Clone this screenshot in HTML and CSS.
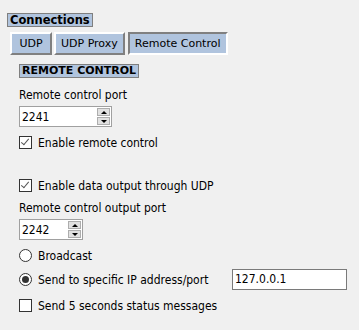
FILE: index.html
```html
<!DOCTYPE html>
<html lang="en">

<head>
  <meta charset="UTF-8" />
  <title>Connections</title>
  <link rel="stylesheet" href="styles.css">
</head>

<body>
  <div class="wrap">
    <div class="title">Connections</div>
    <div class="tabs">
      <button class="tab udp">UDP</button>
      <button class="tab">UDP Proxy</button>
      <button class="tab active">Remote Control</button>
    </div>
    <div class="panel">
      <div class="section">REMOTE CONTROL</div>

      <div class="label first">Remote control port</div>
      <div class="spin wide">
        <span class="value">2241</span>
        <span class="arrows">
          <span class="arrow up"></span>
          <span class="arrow down"></span>
        </span>
      </div>
      <label class="row">
        <span class="box checked"></span>
        <span>Enable remote control</span>
      </label>

      <label class="row gap">
        <span class="box checked"></span>
        <span>Enable data output through UDP</span>
      </label>
      <div class="label">Remote control output port</div>
      <div class="spin">
        <span class="value">2242</span>
        <span class="arrows">
          <span class="arrow up"></span>
          <span class="arrow down"></span>
        </span>
      </div>
      <label class="row">
        <span class="radio"></span>
        <span>Broadcast</span>
      </label>
      <label class="row ip">
        <span class="radio on"></span>
        <span class="ip-text">Send to specific IP address/port</span>
        <span class="field">127.0.0.1</span>
      </label>
      <label class="row last">
        <span class="box"></span>
        <span>Send 5 seconds status messages</span>
      </label>
    </div>
  </div>
</body>

</html>
```

FILE: styles.css
```css
body {
  margin: 0;
  background: #f0f0f0;
  font-family: "DejaVu Sans", sans-serif;
  font-stretch: condensed;
  font-size: 11px;
  color: #000;
}

.wrap {
  padding: 13px 0 0 7px;
}

.title {
  display: inline-block;
  background: #b0c4de;
  border: 1px solid #7f7f7f;
  font-weight: bold;
  font-stretch: normal;
  font-size: 11.5px;
  line-height: 12px;
  padding: 0 2px;
}

.tabs {
  display: flex;
  gap: 2px;
  margin: 5px 0 0 3px;
}

.tab {
  font-family: inherit;
  font-stretch: normal;
  font-size: 11px;
  background: #b0c4de;
  height: 23px;
  padding: 0 5px;
  border: 2px solid;
  border-color: #fff #808080 #808080 #fff;
  color: #000;
}

.tab.udp {
  min-width: 42px;
}

.tab.active {
  margin-left: 1px;
  border-color: #808080 #fff #fff #808080;
}

.panel {
  padding-left: 12px;
}

.section {
  display: inline-block;
  margin-top: 9px;
  background: #b0c4de;
  border: 1px solid #7f7f7f;
  font-weight: bold;
  font-stretch: normal;
  font-size: 11px;
  line-height: 12px;
  padding: 0 2px;
}

.label {
  margin-top: 8px;
  height: 15px;
  line-height: 15px;
  font-size: 12px;
}

.label.first {
  margin-top: 10px;
}

.spin {
  display: flex;
  align-items: center;
  margin-top: 3px;
  width: 64px;
  height: 21px;
  box-sizing: border-box;
  border: 1px solid #a0a0a0;
  background: #fff;
  font-size: 12px;
}

.spin.wide {
  width: 93px;
}

.value {
  flex: 1;
  padding-left: 2px;
}

.arrows {
  display: flex;
  flex-direction: column;
  gap: 1px;
  margin-right: 1px;
}

.arrow {
  width: 13px;
  height: 8px;
  box-sizing: border-box;
  border: 1px solid #adadad;
  background: #e1e1e1;
  display: flex;
  align-items: center;
  justify-content: center;
}

.arrow::after {
  content: "";
  border-left: 3px solid transparent;
  border-right: 3px solid transparent;
}

.up::after {
  border-bottom: 3px solid #000;
}

.down::after {
  border-top: 3px solid #000;
}

.row {
  display: flex;
  align-items: center;
  gap: 6px;
  margin-top: 8px;
  height: 15px;
  font-size: 12px;
  white-space: nowrap;
}

.row.gap {
  margin-top: 28px;
}

.row.ip {
  height: 21px;
  margin-top: 6px;
}

.box,
.radio {
  width: 13px;
  height: 13px;
  box-sizing: border-box;
  border: 1px solid #333;
  background: #fff;
  flex: none;
  position: relative;
}

.box.checked::after {
  content: "";
  position: absolute;
  left: 3px;
  top: 0px;
  width: 3px;
  height: 7px;
  border: solid #555;
  border-width: 0 1px 1px 0;
  transform: rotate(40deg);
}

.radio {
  border-radius: 50%;
}

.radio.on::after {
  content: "";
  position: absolute;
  left: 2px;
  top: 2px;
  width: 7px;
  height: 7px;
  border-radius: 50%;
  background: #333;
}

.ip-text {
  width: 188px;
  flex: none;
}

.field {
  width: 115px;
  height: 21px;
  box-sizing: border-box;
  border: 1px solid #7a7a7a;
  background: #fff;
  line-height: 19px;
  padding-left: 2px;
}
```
